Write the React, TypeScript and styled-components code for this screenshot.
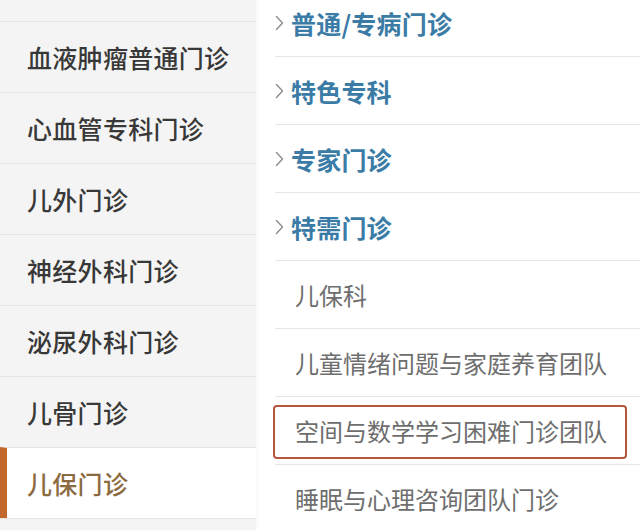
import React from "react";
import styled, { createGlobalStyle } from "styled-components";

const Global = createGlobalStyle`
  html, body { margin: 0; padding: 0; background: #fff; }
  body { font-family: "Noto Sans CJK SC", "Noto Sans", sans-serif; }
  * { box-sizing: border-box; }
`;

const Page = styled.div`
  width: 640px;
  height: 530px;
  display: grid;
  grid-template-columns: 256px 1fr;
  overflow: hidden;
  background: #fff;
`;

const Sidebar = styled.nav`
  background: #f4f4f4;
  padding-top: 21px;
  height: 100%;
  box-shadow: 2px 0 3px rgba(0, 0, 0, 0.03);
`;

const SideList = styled.ul`
  list-style: none;
  margin: 0;
  padding: 0;
  border-bottom: 1px solid #e4e4e4;
`;

const SideItem = styled.li<{ $active?: boolean }>`
  position: relative;
  height: 71px;
  border-top: 1px solid #e4e4e4;
  display: flex;
  align-items: center;
  font-size: 25px;
  font-weight: 500;
  letter-spacing: 0.3px;
  color: ${(p) => (p.$active ? "#8b6a3f" : "#383838")};
  background: ${(p) => (p.$active ? "#fff" : "transparent")};
  border-left: ${(p) => (p.$active ? "7px solid #c2682c" : "none")};
  padding-left: ${(p) => (p.$active ? "20px" : "27px")};
`;

const Content = styled.section`
  overflow: hidden;
  height: 100%;
`;

const ContentList = styled.ul`
  list-style: none;
  margin: -11px 0 0;
  padding: 0 0 0 19px;
`;

const Row = styled.li<{ $highlight?: boolean }>`
  position: relative;
  height: 68px;
  border-bottom: 1px solid #e6e6e6;
  display: flex;
  align-items: center;
  gap: 7px;
  padding-left: 0;

  ${(p) =>
    p.$highlight &&
    `
    &::after {
      content: "";
      position: absolute;
      left: -2px;
      right: 13px;
      top: 8px;
      bottom: 5px;
      border: 2px solid #b3573f;
      border-radius: 4px;
      pointer-events: none;
    }
  `}
`;

const Category = styled.span`
  font-size: 25px;
  font-weight: 700;
  color: #3b7ca6;
  letter-spacing: 0.2px;
`;

const SubItem = styled.span`
  padding-left: 20px;
  font-size: 24px;
  font-weight: 400;
  color: #6e6e6e;
`;

const Chevron = () => (
  <svg width="9" height="16" viewBox="0 0 9 16" aria-hidden="true">
    <polyline
      points="1.5,1.5 7.5,8 1.5,14.5"
      fill="none"
      stroke="#8c8c8c"
      strokeWidth="1.4"
      strokeLinecap="round"
      strokeLinejoin="round"
    />
  </svg>
);

const departments = [
  "血液肿瘤普通门诊",
  "心血管专科门诊",
  "儿外门诊",
  "神经外科门诊",
  "泌尿外科门诊",
  "儿骨门诊",
  "儿保门诊",
];

const categories = ["普通/专病门诊", "特色专科", "专家门诊", "特需门诊"];

const subItems = [
  "儿保科",
  "儿童情绪问题与家庭养育团队",
  "空间与数学学习困难门诊团队",
  "睡眠与心理咨询团队门诊",
];

export default function App() {
  return (
    <>
      <Global />
      <Page>
        <Sidebar>
          <SideList>
            {departments.map((d) => (
              <SideItem key={d} $active={d === "儿保门诊"}>
                {d}
              </SideItem>
            ))}
          </SideList>
        </Sidebar>
        <Content>
          <ContentList>
            {categories.map((c) => (
              <Row key={c}>
                <Chevron />
                <Category>{c}</Category>
              </Row>
            ))}
            {subItems.map((s) => (
              <Row key={s} $highlight={s === "空间与数学学习困难门诊团队"}>
                <SubItem>{s}</SubItem>
              </Row>
            ))}
          </ContentList>
        </Content>
      </Page>
    </>
  );
}
